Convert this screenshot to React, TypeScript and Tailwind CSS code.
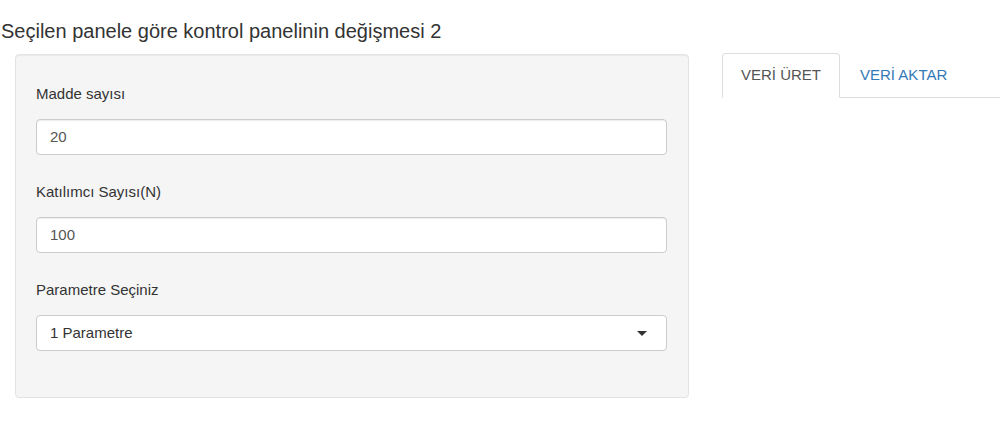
function Field({ label, value }: { label: string; value: string }) {
  return (
    <div className="mb-[26px]">
      <label className="block h-[22px] leading-[22px] mb-[14px] text-[15px] text-[#333]">{label}</label>
      <div className="h-[36px] rounded-[4px] border border-[#ccc] bg-white shadow-[inset_0_1px_1px_rgba(0,0,0,0.075)] pl-[13px] flex items-center text-[15px] text-[#555]">
        {value}
      </div>
    </div>
  );
}

function Sidebar() {
  return (
    <div className="w-[674px] ml-[15px] shrink-0 rounded-[4px] border border-[#e3e3e3] bg-[#f5f5f5] pl-[20px] pr-[21px] pt-[28px] pb-[46px] shadow-[inset_0_1px_1px_rgba(0,0,0,0.05)]">
      <Field label="Madde sayısı" value="20" />
      <Field label="Katılımcı Sayısı(N)" value="100" />
      <div>
        <label className="block h-[22px] leading-[22px] mb-[14px] text-[15px] text-[#333]">Parametre Seçiniz</label>
        <div className="h-[36px] rounded-[4px] border border-[#ccc] bg-white pl-[13px] pr-[19px] flex items-center justify-between text-[15px] text-[#333]">
          <span>1 Parametre</span>
          <svg width="10" height="5" viewBox="0 0 10 5">
            <path d="M0 0 L10 0 L5 5 Z" fill="#333" />
          </svg>
        </div>
      </div>
    </div>
  );
}

function Tabs() {
  return (
    <div className="flex-1 ml-[33px] mt-[-1px]">
      <div className="flex border-b border-[#ddd] h-[45px]">
        <div className="h-[45px] px-[18px] border border-[#ddd] border-b-white rounded-t-[4px] bg-white flex items-center text-[15px] text-[#555]">
          VERİ ÜRET
        </div>
        <div className="h-[44px] ml-[2px] px-[18px] flex items-center text-[15px] text-[#337ab7]">
          VERİ AKTAR
        </div>
      </div>
    </div>
  );
}

export default function App() {
  return (
    <div className="w-[1000px] h-[426px] bg-white overflow-hidden pt-[20px] font-['Liberation_Sans',Arial,sans-serif]">
      <h2 className="ml-[1px] text-[20px] leading-[22px] text-[#333] mb-[12px]">
        Seçilen panele göre kontrol panelinin değişmesi 2
      </h2>
      <div className="flex items-start">
        <Sidebar />
        <Tabs />
      </div>
    </div>
  );
}
